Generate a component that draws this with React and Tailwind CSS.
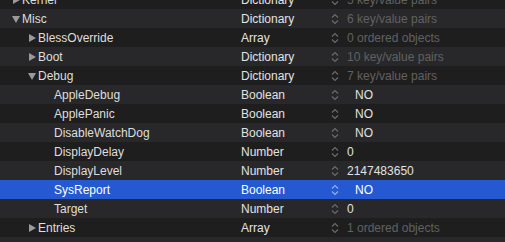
import React from "react"

// visible slice of the plist tree
const ROWS = [
  { key: "Kernel", type: "Dictionary", value: "5 key/value pairs", depth: 0, open: false, muted: true },
  { key: "Misc", type: "Dictionary", value: "6 key/value pairs", depth: 0, open: true, muted: true },
  { key: "BlessOverride", type: "Array", value: "0 ordered objects", depth: 1, open: false, muted: true },
  { key: "Boot", type: "Dictionary", value: "10 key/value pairs", depth: 1, open: false, muted: true },
  { key: "Debug", type: "Dictionary", value: "7 key/value pairs", depth: 1, open: true, muted: true },
  { key: "AppleDebug", type: "Boolean", value: "NO", depth: 2, bool: true },
  { key: "ApplePanic", type: "Boolean", value: "NO", depth: 2, bool: true },
  { key: "DisableWatchDog", type: "Boolean", value: "NO", depth: 2, bool: true },
  { key: "DisplayDelay", type: "Number", value: "0", depth: 2 },
  { key: "DisplayLevel", type: "Number", value: "2147483650", depth: 2 },
  { key: "SysReport", type: "Boolean", value: "NO", depth: 2, bool: true, selected: true },
  { key: "Target", type: "Number", value: "0", depth: 2 },
  { key: "Entries", type: "Array", value: "1 ordered objects", depth: 1, open: false, muted: true },
  { key: "Security", type: "Dictionary", value: "14 key/value pairs", depth: 1, open: false, muted: true },
]

function Triangle({ open, selected }) {
  const fill = selected ? "#ffffff" : "#9a9a9a"
  return (
    <svg width="8" height="8" viewBox="0 0 8 8" className="shrink-0">
      {open ? <path d="M0 1 L8 1 L4 8 Z" fill={fill} /> : <path d="M1 0 L8 4 L1 8 Z" fill={fill} />}
    </svg>
  )
}

function Stepper({ selected }) {
  const c = selected ? "#8fb0ee" : "#6a6a6a"
  return (
    <svg width="8" height="12" viewBox="0 0 8 12" className="shrink-0">
      <path d="M1 4.5 L4 1.5 L7 4.5" fill="none" stroke={c} strokeWidth="1.2" />
      <path d="M1 7.5 L4 10.5 L7 7.5" fill="none" stroke={c} strokeWidth="1.2" />
    </svg>
  )
}

export default function App() {
  return (
    <div
      className="w-[505px] h-[242px] overflow-hidden bg-[#1e1e1f] text-[12px] leading-none"
      style={{ fontFamily: '"Liberation Sans", Arial, sans-serif' }}
    >
      <div className="-mt-[10px]">
        {ROWS.map((r, i) => {
          const bg = r.selected ? "bg-[#2459d2]" : i % 2 === 1 ? "bg-[#28282a]" : "bg-[#1e1e1f]"
          const pad = r.depth === 0 ? "pl-[12px]" : r.depth === 1 ? "pl-[28px]" : "pl-[54px]"
          const isParent = r.open !== undefined
          return (
            <div key={r.key} className={`flex items-center h-[19px] pt-px ${bg}`}>
              <div className={`w-[241px] flex items-center gap-[2px] ${pad}`}>
                {isParent && <Triangle open={r.open} selected={r.selected} />}
                <span className={r.selected ? "text-white" : "text-[#dedede]"}>{r.key}</span>
              </div>
              <div className={`w-[90px] ${r.selected ? "text-white" : "text-[#e2e2e2]"}`}>{r.type}</div>
              <div className="flex items-center gap-[8px]">
                <Stepper selected={r.selected} />
                <span
                  className={`${r.bool ? "pl-[8px]" : ""} ${
                    r.selected ? "text-white" : r.muted ? "text-[#616161]" : "text-[#e2e2e2]"
                  }`}
                >
                  {r.value}
                </span>
              </div>
            </div>
          )
        })}
      </div>
    </div>
  )
}
